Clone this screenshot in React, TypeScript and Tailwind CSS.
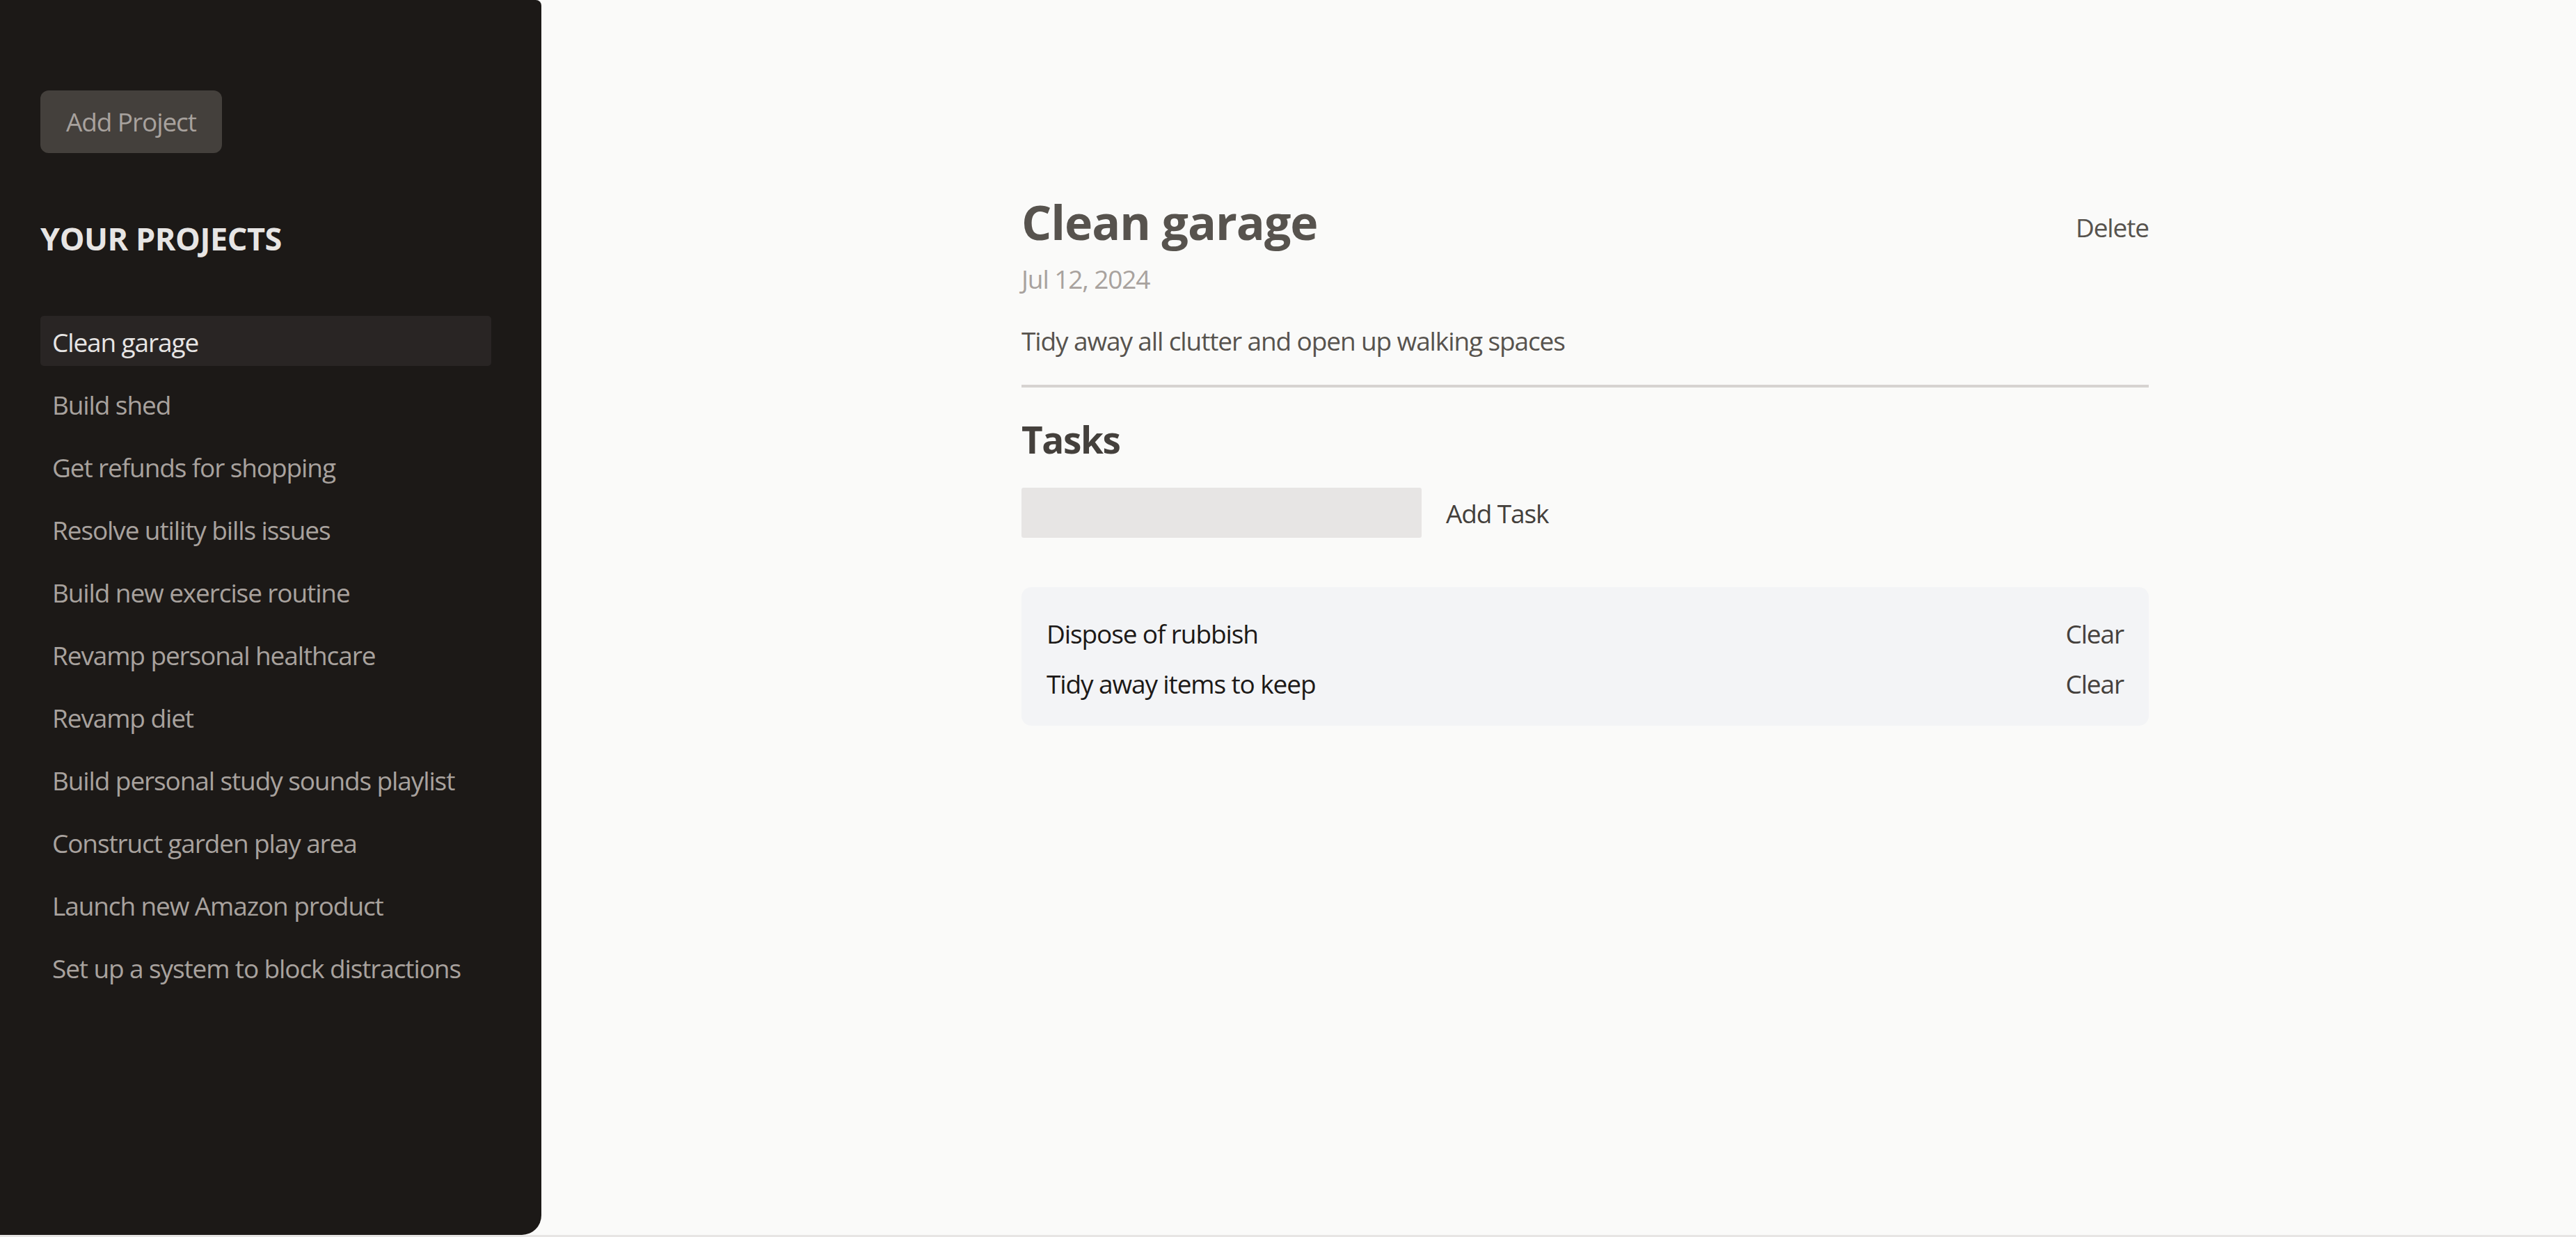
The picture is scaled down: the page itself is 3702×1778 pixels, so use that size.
import React, { useState } from 'react';

const projects = [
  'Clean garage',
  'Build shed',
  'Get refunds for shopping',
  'Resolve utility bills issues',
  'Build new exercise routine',
  'Revamp personal healthcare',
  'Revamp diet',
  'Build personal study sounds playlist',
  'Construct garden play area',
  'Launch new Amazon product',
  'Set up a system to block distractions',
];

const initialTasks = ['Dispose of rubbish', 'Tidy away items to keep'];

const Sidebar: React.FC<{ selected: number; onSelect: (i: number) => void }> = ({ selected, onSelect }) => {
  return (
    <aside className="w-[778px] shrink-0 bg-[#1c1917] rounded-tr-[8px] rounded-br-[28px] pl-[58px] pr-[72px] pt-[130px]">
      <button className="h-[90px] px-[37px] rounded-[12px] bg-[#44403c] text-[#a8a29e] text-[37px] leading-[50px] tracking-[-0.03em]">
        Add Project
      </button>
      <h2 className="mt-[95px] text-[45px] leading-[56px] font-bold uppercase tracking-[-0.01em] text-[#e7e5e4]">
        Your Projects
      </h2>
      <ul className="mt-[83px] flex flex-col gap-[18px]">
        {projects.map((p, i) => (
          <li key={p}>
            <button
              onClick={() => onSelect(i)}
              className={`w-full h-[72px] text-left pl-[17px] pt-[3px] rounded-[5px] text-[37px] leading-[50px] tracking-[-0.03em] ${
                i === selected ? 'bg-[#292524] text-[#e7e5e4]' : 'text-[#a8a29e]'
              }`}
            >
              {p}
            </button>
          </li>
        ))}
      </ul>
    </aside>
  );
};

export default function App() {
  const [selected, setSelected] = useState(0);
  const [tasks, setTasks] = useState(initialTasks);
  const [text, setText] = useState('');

  return (
    <div
      className="h-[1778px] w-full flex flex-col bg-[#fafaf9] overflow-hidden"
      style={{ fontFamily: '"Open Sans", "Noto Sans", sans-serif' }}
    >
      <div className="flex flex-1 min-h-0">
        <Sidebar selected={selected} onSelect={setSelected} />
        <main className="flex-1 pl-[690px] pt-[279px]">
          <div className="w-[1620px]">
            <header className="border-b-[4px] border-[#d6d3d1] pb-[38px]">
              <div className="flex justify-between items-start">
                <h1 className="text-[68px] leading-[80px] font-bold tracking-[-0.015em] text-[#57534e]">
                  {projects[selected]}
                </h1>
                <button className="mt-[23px] text-[37px] leading-[50px] tracking-[-0.03em] text-[#57534e]">
                  Delete
                </button>
              </div>
              <p className="mt-[17px] text-[37px] leading-[50px] tracking-[-0.03em] text-[#a8a29e]">Jul 12, 2024</p>
              <p className="mt-[39px] text-[37px] leading-[50px] tracking-[-0.03em] text-[#57534e]">
                Tidy away all clutter and open up walking spaces
              </p>
            </header>
            <section>
              <h2 className="mt-[43px] text-[53px] leading-[64px] font-bold tracking-[-0.025em] text-[#44403c]">
                Tasks
              </h2>
              <div className="mt-[37px] flex items-center gap-[35px] h-[72px]">
                <input
                  value={text}
                  onChange={(e) => setText(e.target.value)}
                  className="w-[575px] h-[72px] rounded-[3px] bg-[#e7e5e4] px-[16px] text-[37px] outline-none"
                />
                <button
                  onClick={() => {
                    if (!text.trim()) return;
                    setTasks([...tasks, text.trim()]);
                    setText('');
                  }}
                  className="pt-[2px] text-[37px] leading-[50px] tracking-[-0.03em] text-[#44403c]"
                >
                  Add Task
                </button>
              </div>
              <ul className="mt-[71px] rounded-[14px] bg-[#f3f4f6] pt-[31px] pb-[24px] px-[36px]">
                {tasks.map((t) => (
                  <li key={t} className="h-[72px] flex items-center justify-between">
                    <span className="text-[37px] leading-[50px] tracking-[-0.03em] text-[#1c1917]">{t}</span>
                    <button
                      onClick={() => setTasks(tasks.filter((x) => x !== t))}
                      className="text-[37px] leading-[50px] tracking-[-0.03em] text-[#44403c]"
                    >
                      Clear
                    </button>
                  </li>
                ))}
              </ul>
            </section>
          </div>
        </main>
      </div>
      <div className="h-[3px] bg-[#e7e5e4]" />
    </div>
  );
}
